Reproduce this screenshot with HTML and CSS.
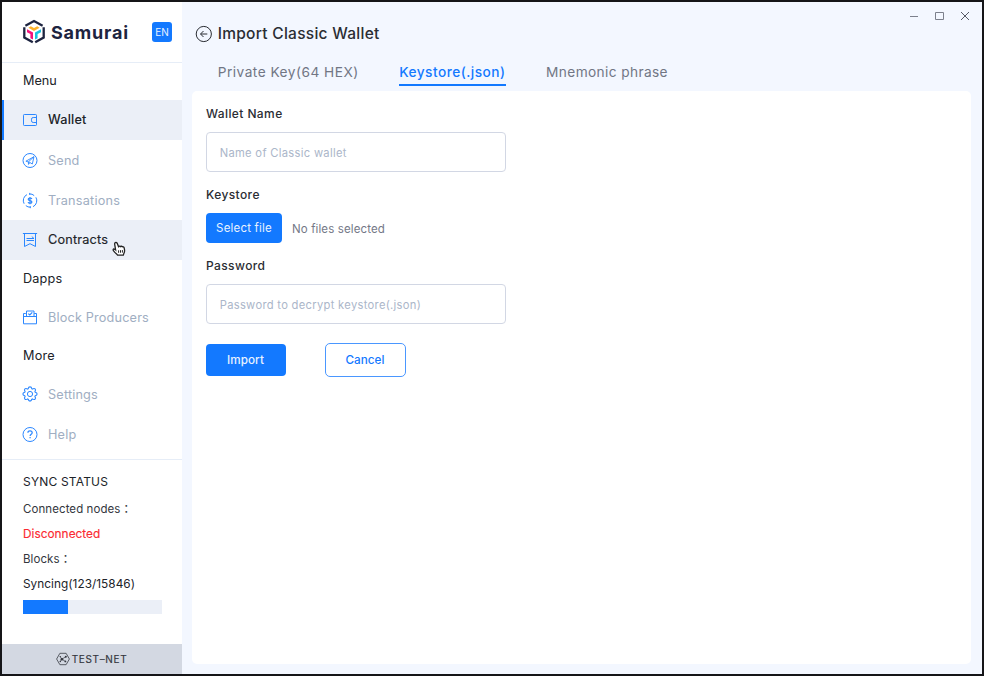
FILE: index.html
```html
<!DOCTYPE html>
<html lang="en">
<head>
<meta charset="utf-8">
<title>Samurai</title>
<link rel="stylesheet" href="styles.css">
</head>
<body>
<div class="window">
  <aside class="sidebar">
    <header class="brand">
      <svg class="logo" width="24" height="26" viewBox="0 0 24 26" fill="none">
        <g stroke="#1d2440" stroke-width="2.300">
          <path d="M3.400 6.700 12 2l8.600 4.700"/>
          <path d="M2.300 8.200v10.300l8.500 4.800"/>
          <path d="M21.700 8.200v10.300l-8.500 4.800"/>
        </g>
        <path d="M6.400 8.800l2.400-1.600 3.200 1.700 3.200-1.700 2.400 1.600L12 12z" fill="#fdb22b"/>
        <path d="M5 10.300l6 3.200v7l-2.600-1.300v-4.100l-3.400-1.900z" fill="#f5127b"/>
        <path d="M19 10.300l-6 3.200v7l2.600-1.300v-4.100l3.400-1.900z" fill="#19c3e0"/>
      </svg>
      <span class="brand-name">Samurai</span>
      <span class="lang">EN</span>
    </header>
    <nav class="nav">
      <h2 class="group first">Menu</h2>
      <a class="item active">
        <svg class="icon" viewBox="0 0 16 16"><rect x="1.500" y="2.500" width="13" height="11" rx=".8"/><path d="M14.500 5.500h-3.300a1.700 1.700 0 0 0-1.700 1.700v1.600a1.700 1.700 0 0 0 1.700 1.700h3.300"/></svg>
        <span>Wallet</span>
      </a>
      <a class="item">
        <svg class="icon" viewBox="0 0 16 16"><circle cx="8" cy="8.500" r="7"/><path stroke-width=".9" d="M3.900 9.200l8.100-4.500-1.700 7.300-2.600-1.600zM12 4.700l-5.600 5.200.1 2.500 1.300-1.700"/></svg>
        <span>Send</span>
      </a>
      <a class="item t-trans">
        <svg class="icon" viewBox="0 0 16 16"><path d="M5 2.600a6.600 6.600 0 0 0-2.900 9.100M3.800 13.600a6.700 6.700 0 0 0 4.700 1.600M11 14.700a6.700 6.700 0 0 0 2.900-9.400M12.200 3.600a6.700 6.700 0 0 0-4.700-1.700M7.700.9v2M8.300 14.200v2"/><path stroke-width="1.200" d="M9.900 7c-.3-.7-.9-1-1.900-1-1.100 0-1.800.5-1.800 1.200 0 1.800 3.700.9 3.700 2.700 0 .8-.8 1.300-1.900 1.300-1 0-1.700-.4-1.900-1.100M8 4.900v7.400"/></svg>
        <span>Transations</span>
      </a>
      <a class="item hover">
        <svg class="icon" viewBox="0 0 16 16"><path d="M.9 1.500h14.200M2.500 1.500v13l5.500-2.800 5.500 2.800v-13M4.500 6.500h7.500M9.800 4.600l2.200 1.900M4.500 8.500h7.500"/></svg>
        <span>Contracts</span>
        <svg class="cursor" width="14" height="16" viewBox="0 0 14 16"><path d="M3.300 1.600c1-.5 1.700.2 2 1l1.200 3c.5-.7 1.500-.6 1.800 0 .6-.6 1.600-.4 1.900.2.800-.3 1.700.1 1.900.9l.5 2.300c.2 2-.3 2.900-.9 3.900l-.4 1.300H5.600c-.5-1.400-2-2-3-3.100-.7-.8-1.700-1.600-1.500-2.500.3-.9 1.500-.7 2.500.3L2.700 3.400c-.2-.8-.1-1.400.6-1.800z" fill="#fff" stroke="#222" stroke-width="1.300"/><path d="M6.600 9.300v2.500M8.500 9.200v2.500M10.400 9.100v2.500" stroke="#222"/></svg>
      </a>
      <h2 class="group">Dapps</h2>
      <a class="item">
        <svg class="icon" viewBox="0 0 16 16"><path d="M3.800 4.500H1.500v10.300h13V4.500h-2.300M1.500 7.500h13M4.500 7.500v-5.500h7.500v5.500"/><path stroke-width="1.200" d="M6.300 4.600l1.500 1.300 2.500-2.500"/></svg>
        <span>Block Producers</span>
      </a>
      <h2 class="group t-more">More</h2>
      <a class="item">
        <svg class="icon" viewBox="0 0 16 16"><circle cx="8" cy="8" r="2.600"/><path stroke-width="1.100" stroke-linejoin="round" d="M6.200 2.700Q6.500.9 8 .9T9.800 2.700L10.400 3.100Q12.100 1.900 13.100 2.900T12.900 5.600L13.200 6.200Q15.100 6.500 15.100 8T13.200 9.800L12.900 10.400Q14.100 12.100 13.100 13.100T10.400 12.900L9.800 13.200Q9.500 15.100 8 15.100T6.200 13.200L5.600 12.900Q3.900 14.100 2.900 13.100T3.100 10.400L2.800 9.800Q.9 9.500.9 8T2.800 6.200L3.100 5.600Q1.900 3.900 2.900 2.900T5.600 3.100z"/></svg>
        <span>Settings</span>
      </a>
      <a class="item">
        <svg class="icon" viewBox="0 0 16 16"><circle cx="8" cy="8.500" r="7"/><path stroke-width="1.200" d="M5.900 6.800c0-1.300.9-2 2.100-2s2.200.7 2.200 1.900c0 1.500-2.100 1.500-2.100 3.200M8.100 11v1.300"/></svg>
        <span>Help</span>
      </a>
    </nav>
    <section class="status">
      <h3 class="st-title">SYNC STATUS</h3>
      <p class="st-label">Connected nodes<span class="colon">：</span></p>
      <p class="st-bad">Disconnected</p>
      <p class="st-label">Blocks<span class="colon">：</span></p>
      <p class="st-value">Syncing(123/15846)</p>
      <div class="bar"><div class="fill"></div></div>
    </section>
    <footer class="net">
      <svg width="14" height="14" viewBox="0 0 14 14" fill="none" stroke="#4a4d55"><path stroke-width=".9" d="M3.900 1.300h6.200L13.400 7l-3.300 5.700H3.900L.6 7z"/><path stroke-width=".8" d="M4.200 4.600l1.600 2.600-1.600 2.300M5.800 7.200l4-2.400M5.800 7.200l3.500 2.200"/><g fill="#33363d" stroke="none"><circle cx="5.900" cy="7.200" r="1.300"/><circle cx="9.800" cy="4.800" r="1"/><circle cx="9.400" cy="9.400" r=".9"/><circle cx="4.300" cy="4.600" r=".7"/><circle cx="4.300" cy="9.500" r=".7"/></g></svg>
      <span>TEST–NET</span>
    </footer>
  </aside>
  <main class="main">
    <div class="controls">
      <svg width="62" height="14" viewBox="0 0 62 14" fill="none" stroke="#7c808c"><path d="M1 7.500h8M26.500 3.500h8v7h-8z"/><path stroke="#565a66" d="M52 3l8 8M60 3l-8 8"/></svg>
    </div>
    <div class="heading">
      <svg width="18" height="18" viewBox="0 0 18 18" fill="none" stroke="#2a2d33"><circle cx="8.800" cy="9" r="7.600"/><path d="M12.300 9H5.700M8.500 6L5.500 9l3 3"/></svg>
      <h1>Import Classic Wallet</h1>
    </div>
    <div class="tabs">
      <a class="tab">Private Key(64 HEX)</a>
      <a class="tab current">Keystore(.json)</a>
      <a class="tab last">Mnemonic phrase</a>
    </div>
    <form class="panel">
      <label class="label">Wallet Name</label>
      <div class="field">Name of Classic wallet</div>
      <label class="label second">Keystore</label>
      <div class="file-row">
        <span class="select">Select file</span>
        <span class="no-file">No files selected</span>
      </div>
      <label class="label third">Password</label>
      <div class="field">Password to decrypt keystore(.json)</div>
      <div class="actions">
        <span class="btn primary">Import</span>
        <span class="btn outline">Cancel</span>
      </div>
    </form>
  </main>
</div>
</body>
</html>
```
FILE: styles.css
```css
* { box-sizing: border-box; }
body, h1, h2, h3, p { margin: 0; font-weight: 400; }
body { font-family: Inter, "Liberation Sans", sans-serif; white-space: nowrap; }
svg { display: block; flex: none; }

.window { display: flex; width: 984px; height: 676px; border: 2px solid #151518; background: #f3f7ff; }

.sidebar { display: flex; flex-direction: column; width: 180px; background: #fff; }
.brand { display: flex; align-items: center; height: 61px; padding: 0 10px 0 20px; border-bottom: 1px solid #e6edf7; }
.logo { margin-top: -1px; }
.brand-name { margin-left: 5px; padding-top: 2px; font-size: 18px; font-weight: 700; line-height: 24px; letter-spacing: .8px; color: #1d2440; }
.lang { margin-left: auto; width: 20px; height: 20px; border-radius: 3px; background: #1379ff; color: #e8f2ff; font-size: 10px; line-height: 21px; text-align: center; letter-spacing: -.1px; }

.group { height: 37px; padding-left: 21px; font-size: 12.700px; line-height: 37px; letter-spacing: .15px; color: #202329; }
.group.first { line-height: 36px; letter-spacing: 0; }
.t-more { letter-spacing: .2px; }
.item { position: relative; display: flex; align-items: center; height: 40px; padding-left: 20px; gap: 10px; font-size: 12.700px; letter-spacing: .17px; color: #a0aec2; }
.t-trans { letter-spacing: .22px; }
.item > span { padding-top: 1px; }
.icon { width: 16px; height: 16px; overflow: visible; fill: none; stroke: #2b87ff; stroke-width: 1; }
.item.active, .item.hover { background: #ebeff7; color: #202329; }
.item.active > span, .item.hover > span { padding: 0 0 2px; }
.item.active { border-left: 2px solid #1379ff; padding-left: 18px; font-weight: 500; letter-spacing: .2px; }
.item.hover { letter-spacing: .2px; -webkit-text-stroke: .15px #202329; }
.cursor { position: absolute; left: 110px; top: 21px; }

.status { margin-top: 5px; padding: 11px 20px 0 21px; border-top: 1px solid #e6edf7; font-size: 12px; color: #33363d; }
.status p { height: 25px; line-height: 25px; }
.st-title { height: 26px; font-size: 12px; line-height: 22px; letter-spacing: .18px; color: #202329; }
.status .st-label { font-size: 11.500px; letter-spacing: .08px; }
.colon { position: relative; top: .4px; font-family: "Noto Sans CJK JP", sans-serif; font-size: 11.500px; line-height: 1; }
.status .st-bad { line-height: 24px; font-size: 11.800px; letter-spacing: .04px; color: #fb2a32; -webkit-text-stroke: .15px #fb2a32; }
.status .st-value { line-height: 24px; font-size: 11.800px; letter-spacing: .04px; color: #202329; }
.bar { height: 14px; margin-top: 3px; background: #ebeff7; }
.fill { width: 45px; height: 14px; background: #1379ff; }
.net { display: flex; align-items: center; justify-content: center; gap: 2px; height: 30px; margin-top: auto; padding-right: 1px; background: #d3d8e2; color: #33363d; font-size: 10px; letter-spacing: .65px; -webkit-text-stroke: .15px #33363d; }

.main { flex: 1; display: flex; flex-direction: column; padding: 7px 11px 10px 10px; }
.controls { display: flex; justify-content: flex-end; height: 14px; }
.heading { display: flex; align-items: center; height: 22px; padding-left: 3px; gap: 4.700px; }
.heading h1 { font-size: 15.500px; font-weight: 500; line-height: 22px; letter-spacing: .28px; color: #2a2d33; }
.tabs { display: flex; gap: 40.500px; height: 46px; padding: 14px 0 0 25.700px; }
.tab { height: 27px; font-size: 13.700px; line-height: 26px; letter-spacing: .48px; color: #717684; }
.tab.last { letter-spacing: .38px; }
.tab.current { border-bottom: 2px solid #1379ff; color: #1379ff; font-weight: 500; letter-spacing: .47px; }

.panel { flex: 1; border-radius: 5px; background: #fff; padding: 13px 14px; }
.label { display: block; height: 28px; font-size: 12px; font-weight: 500; line-height: 20px; letter-spacing: .4px; color: #2a2d33; }
.field { width: 299.500px; height: 40px; border: 1px solid #d2d7e4; border-radius: 4px; padding: 1px 12.700px 0; font-size: 11.200px; line-height: 39px; letter-spacing: .3px; color: #abb6c9; }
.second { margin-top: 13px; }
.file-row { display: flex; align-items: center; gap: 10px; height: 30px; color: #747887; font-size: 11.500px; }
.select { width: 76px; height: 30px; border-radius: 4px; background: #1379ff; color: #e8f2ff; line-height: 30px; text-align: center; letter-spacing: .2px; }
.no-file { padding-top: 1px; letter-spacing: .12px; }
.third { margin-top: 13px; }
.actions { display: flex; gap: 39px; margin-top: 19px; align-items: center; }
.btn { width: 80px; height: 32px; border-radius: 4px; padding-right: 1px; font-size: 11.700px; font-weight: 500; line-height: 32px; text-align: center; letter-spacing: .05px; }
.primary { background: #1379ff; color: #e8f2ff; }
.outline { width: 81px; height: 34px; border: 1px solid #4a97ff; border-radius: 5px; color: #1379ff; }
```
